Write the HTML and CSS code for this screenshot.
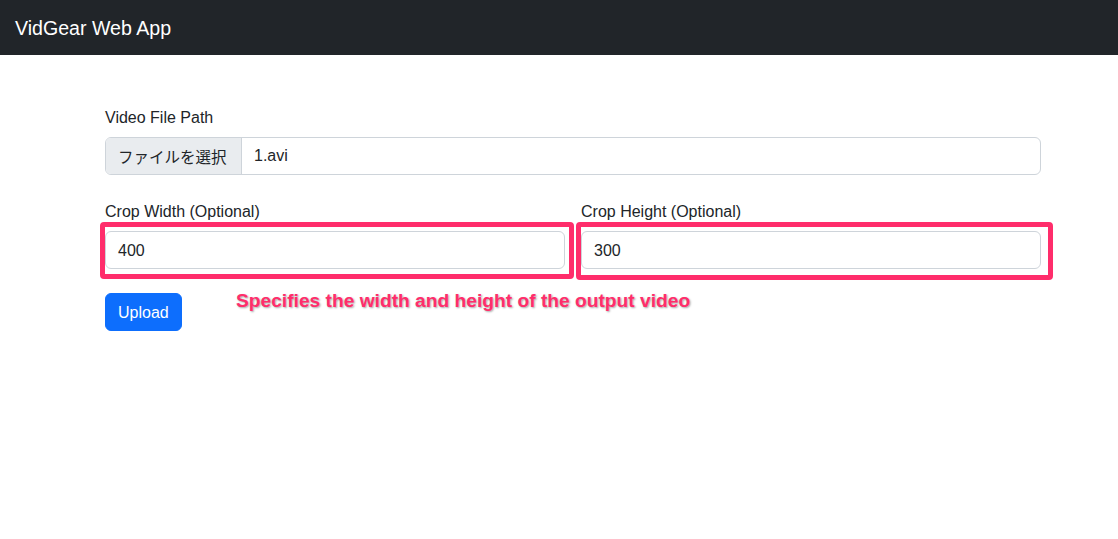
FILE: index.html
```html
<!DOCTYPE html>
<html lang="en">
<head>
<meta charset="utf-8">
<title>VidGear Web App</title>
<link rel="stylesheet" href="styles.css">
</head>
<body>
<nav class="navbar"><span class="brand">VidGear Web App</span></nav>
<main class="container">
  <div class="field">
    <label class="label">Video File Path</label>
    <div class="file-input">
      <span class="file-btn">ファイルを選択</span>
      <span class="file-name">1.avi</span>
    </div>
  </div>
  <div class="row">
    <div class="col">
      <label class="label">Crop Width (Optional)</label>
      <div class="mark-wrap">
        <div class="input">400</div>
        <div class="mark mark-left"></div>
      </div>
    </div>
    <div class="col">
      <label class="label">Crop Height (Optional)</label>
      <div class="mark-wrap">
        <div class="input">300</div>
        <div class="mark mark-right"></div>
      </div>
    </div>
  </div>
  <div class="actions">
    <button class="btn">Upload</button>
    <span class="note">Specifies the width and height of the output video</span>
  </div>
</main>
</body>
</html>
```
FILE: styles.css
```css
* { box-sizing: border-box; }
body {
  margin: 0;
  font-family: "Liberation Sans", Arial, "Noto Sans CJK JP", sans-serif;
  font-size: 16px;
  line-height: 24px;
  color: #212529;
  background: #fff;
}
.navbar {
  height: 55px;
  background: #212529;
  display: flex;
  align-items: center;
  padding-left: 15px;
}
.brand {
  color: #fff;
  font-size: 19.6px;
}
.container {
  width: 936px;
  margin-left: 105px;
  padding-top: 50px;
}
.label {
  display: block;
  margin-bottom: 8px;
  position: relative;
  top: 1px;
}
.field { margin-bottom: 24px; }
.file-input {
  display: flex;
  height: 38px;
  border: 1px solid #ced4da;
  border-radius: 6px;
  overflow: hidden;
}
.file-btn {
  background: #e9ecef;
  border-right: 1px solid #ced4da;
  padding: 6px 12px;
  width: 136px;
  font-family: "Noto Sans CJK JP", sans-serif;
  font-size: 15.5px;
  line-height: 24px;
  white-space: nowrap;
}
.file-name {
  padding: 6px 12px;
}
.row {
  display: flex;
  gap: 16px;
  margin-bottom: 24px;
}
.col { flex: 1; }
.mark-wrap { position: relative; }
.input {
  height: 38px;
  border: 1px solid #ced4da;
  border-radius: 6px;
  padding: 7px 12px 5px;
}
.mark {
  position: absolute;
  border: 5px solid #ff2d6b;
  border-radius: 4px;
}
.mark-left { left: -5px; right: -9px; top: -9px; bottom: -10px; }
.mark-right { left: -5px; right: -12px; top: -9px; bottom: -11px; }
.actions {
  position: relative;
  height: 38px;
}
.btn {
  height: 38px;
  padding: 7px 12px 5px;
  background: #0d6efd;
  border: 1px solid #0d6efd;
  border-radius: 6px;
  color: #fff;
  font-family: inherit;
  font-size: 16px;
  line-height: 24px;
}
.note {
  position: absolute;
  left: 131px;
  top: -4px;
  color: #ff2d6b;
  font-weight: bold;
  font-size: 19.2px;
  line-height: 24px;
  text-shadow: 1px 1px 2px rgba(0,0,0,0.35);
  white-space: nowrap;
}
```
